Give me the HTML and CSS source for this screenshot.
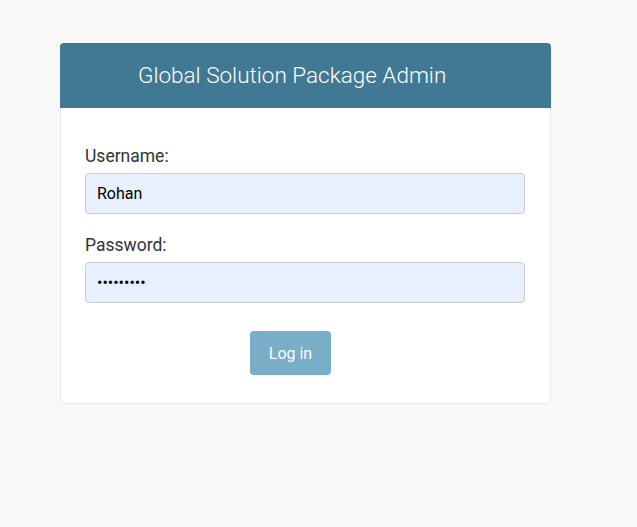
FILE: index.html
```html
<!DOCTYPE html>
<html>
<head>
<meta charset="utf-8">
<link rel="stylesheet" href="styles.css">
</head>
<body>
<div class="card">
  <div class="header"><h1 class="title">Global Solution Package Admin</h1></div>
  <form class="form">
    <div class="row">
      <label class="label">Username:</label>
      <div class="input">Rohan</div>
    </div>
    <div class="row">
      <label class="label">Password:</label>
      <div class="input dots">•••••••••</div>
    </div>
    <div class="submit-row"><button type="button" class="btn">Log in</button></div>
  </form>
</div>
</body>
</html>
```
FILE: styles.css
```css
html, body { margin: 0; padding: 0; }
body {
  background: #f8f8f8;
  font-family: Roboto, "Liberation Sans", sans-serif;
  color: #333;
  height: 527px;
  padding-top: 43px;
  box-sizing: border-box;
}
.card {
  margin-left: 60px;
  width: 491px;
}
.header {
  background: #417893;
  height: 65px;
  display: flex;
  align-items: center;
  padding-left: 78px;
  border-radius: 4px 4px 0 0;
}
.title {
  margin: 0 0 1px 0;
  font-weight: 300;
  font-size: 22.5px;
  color: #fff;
}
.form {
  margin: 0;
  background: #fff;
  border: 1px solid #eaeaea;
  border-top: none;
  border-radius: 0 0 4px 4px;
  padding: 38px 25px 28px 24px;
}
.row { margin-bottom: 21px; }
.row + .row { margin-bottom: 28px; }
.label {
  display: block;
  font-size: 17.5px;
  line-height: 20px;
  margin-bottom: 7px;
}
.input {
  height: 41px;
  box-sizing: border-box;
  border: 1px solid #ccc;
  border-radius: 4px;
  background: #e8f0fe;
  padding: 0 11px;
  font-size: 16px;
  color: #000;
  display: flex;
  align-items: center;
}
.dots { font-size: 16px; letter-spacing: 0; }
.submit-row { display: flex; justify-content: center; margin-right: 29px; }
.btn {
  width: 81px;
  height: 44px;
  border: none;
  border-radius: 4px;
  background: #79aec8;
  color: #fff;
  font-family: Roboto, "Liberation Sans", sans-serif;
  font-size: 16px;
  padding: 0;
}
```
